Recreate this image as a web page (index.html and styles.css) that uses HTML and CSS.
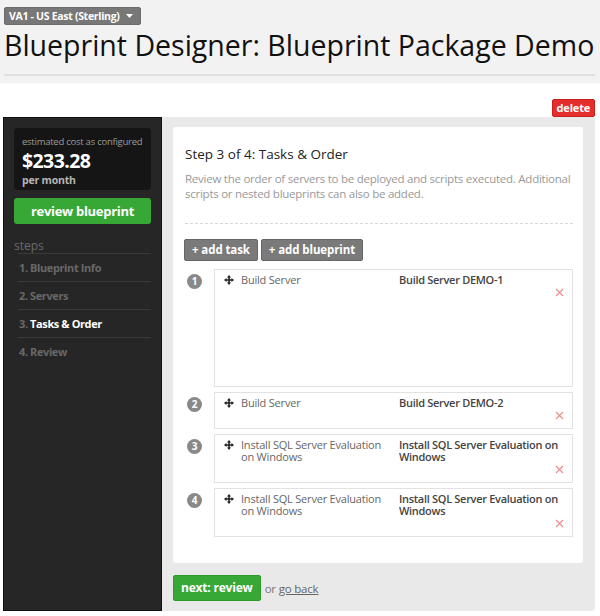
FILE: index.html
```html
<!DOCTYPE html>
<html>
<head>
<meta charset="utf-8">
<link rel="stylesheet" href="styles.css">
</head>
<body>
<div class="header">
  <div class="region">VA1 - US East (Sterling) <svg class="caret" width="7" height="4" viewBox="0 0 7 4"><path d="M0 0H7L3.5 4Z" fill="#fff"/></svg></div>
  <h1>Blueprint Designer: Blueprint Package Demo</h1>
  <div class="rule"></div>
</div>
<div class="toolbar"><span class="delete">delete</span></div>
<div class="layout">
  <div class="sidebar">
    <div class="cost">
      <div class="cost-label">estimated cost as configured</div>
      <div class="cost-value">$233.28</div>
      <div class="cost-unit">per month</div>
    </div>
    <div class="review-btn">review blueprint</div>
    <div class="steps-label">steps</div>
    <ul class="steps">
      <li>1. Blueprint Info</li>
      <li>2. Servers</li>
      <li class="current"><span class="num">3.</span> Tasks &amp; Order</li>
      <li>4. Review</li>
    </ul>
  </div>
  <div class="panel">
    <div class="card">
      <h2>Step 3 of 4: Tasks &amp; Order</h2>
      <p class="desc">Review the order of servers to be deployed and scripts executed. Additional scripts or nested blueprints can also be added.</p>
      <div class="dashed"></div>
      <div class="actions">
        <span class="gbtn">+ add task</span>
        <span class="gbtn">+ add blueprint</span>
      </div>
      <div class="tasks">
        <div class="task">
          <div class="badge">1</div>
          <div class="tbox tall">
            <div class="trow">
              <span class="move"><svg width="10" height="10" viewBox="0 0 10 10"><path d="M5 0L7 2.5H5.8V4.2H7.5V3L10 5L7.5 7V5.8H5.8V7.5H7L5 10L3 7.5H4.2V5.8H2.5V7L0 5L2.5 3V4.2H4.2V2.5H3Z" fill="#222"/></svg></span>
              <span class="tname">Build Server</span>
              <span class="tdetail">Build Server DEMO-1</span>
            </div>
            <div class="tdel"><svg width="9" height="9" viewBox="0 0 9 9"><path d="M1 1L8 8M8 1L1 8" stroke="#ec8a8a" stroke-width="1.1"/></svg></div>
          </div>
        </div>
        <div class="task">
          <div class="badge">2</div>
          <div class="tbox">
            <div class="trow">
              <span class="move"><svg width="10" height="10" viewBox="0 0 10 10"><path d="M5 0L7 2.5H5.8V4.2H7.5V3L10 5L7.5 7V5.8H5.8V7.5H7L5 10L3 7.5H4.2V5.8H2.5V7L0 5L2.5 3V4.2H4.2V2.5H3Z" fill="#222"/></svg></span>
              <span class="tname">Build Server</span>
              <span class="tdetail">Build Server DEMO-2</span>
            </div>
            <div class="tdel"><svg width="9" height="9" viewBox="0 0 9 9"><path d="M1 1L8 8M8 1L1 8" stroke="#ec8a8a" stroke-width="1.1"/></svg></div>
          </div>
        </div>
        <div class="task">
          <div class="badge">3</div>
          <div class="tbox">
            <div class="trow">
              <span class="move"><svg width="10" height="10" viewBox="0 0 10 10"><path d="M5 0L7 2.5H5.8V4.2H7.5V3L10 5L7.5 7V5.8H5.8V7.5H7L5 10L3 7.5H4.2V5.8H2.5V7L0 5L2.5 3V4.2H4.2V2.5H3Z" fill="#222"/></svg></span>
              <span class="tname">Install SQL Server Evaluation on Windows</span>
              <span class="tdetail">Install SQL Server Evaluation on Windows</span>
            </div>
            <div class="tdel"><svg width="9" height="9" viewBox="0 0 9 9"><path d="M1 1L8 8M8 1L1 8" stroke="#ec8a8a" stroke-width="1.1"/></svg></div>
          </div>
        </div>
        <div class="task">
          <div class="badge">4</div>
          <div class="tbox">
            <div class="trow">
              <span class="move"><svg width="10" height="10" viewBox="0 0 10 10"><path d="M5 0L7 2.5H5.8V4.2H7.5V3L10 5L7.5 7V5.8H5.8V7.5H7L5 10L3 7.5H4.2V5.8H2.5V7L0 5L2.5 3V4.2H4.2V2.5H3Z" fill="#222"/></svg></span>
              <span class="tname">Install SQL Server Evaluation on Windows</span>
              <span class="tdetail">Install SQL Server Evaluation on Windows</span>
            </div>
            <div class="tdel"><svg width="9" height="9" viewBox="0 0 9 9"><path d="M1 1L8 8M8 1L1 8" stroke="#ec8a8a" stroke-width="1.1"/></svg></div>
          </div>
        </div>
      </div>
    </div>
    <div class="next-row">
      <span class="next-btn">next: review</span>
      <span class="or">or <a class="back">go back</a></span>
    </div>
  </div>
</div>
</body>
</html>
```

FILE: styles.css
```css
* { box-sizing: border-box; }
body {
  margin: 0;
  font-family: "Open Sans", "DejaVu Sans", sans-serif;
  background: #fff;
  color: #333;
}
.header {
  background: #f2f2f2;
  height: 83px;
  padding: 3px 5px 0 4px;
}
.region {
  display: inline-flex;
  align-items: center;
  gap: 6px;
  height: 18px;
  padding: 0 7px 0 4px;
  background: #777;
  border: 1px solid #6b6b6b;
  border-radius: 2px;
  color: #fff;
  font-size: 10.5px;
  font-weight: 700;
  letter-spacing: -0.3px;
}
.caret { display: block; }
h1 {
  margin: 1px 0 0;
  font-size: 28.5px;
  font-weight: 400;
  line-height: 38px;
  color: #111;
  white-space: nowrap;
}
.rule {
  margin-top: 10px;
  height: 2px;
  background: #e0e0e0;
}
.toolbar {
  display: flex;
  justify-content: flex-end;
  padding: 16px 5px 0 0;
}
.delete {
  height: 18px;
  line-height: 16px;
  padding: 0 4px;
  background: #e52d2d;
  border: 1px solid #c81e1e;
  border-radius: 2px;
  color: #fff;
  font-size: 11px;
  font-weight: 700;
  letter-spacing: -0.2px;
}
.layout {
  display: flex;
  height: 494px;
  margin: 0 5px 0 3px;
}
.sidebar {
  width: 159px;
  flex: none;
  background: #262626;
  border: 1px solid #111;
  padding: 10px 10px 0 10px;
}
.cost {
  background: #151515;
  border-radius: 4px;
  padding: 7px 8px 3px;
}
.cost-label {
  font-size: 9.5px;
  line-height: 14px;
  letter-spacing: -0.25px;
  color: #9a9a9a;
  white-space: nowrap;
}
.cost-value {
  font-size: 19.5px;
  line-height: 24px;
  font-weight: 700;
  letter-spacing: -0.6px;
  color: #fff;
}
.cost-unit {
  font-size: 10.5px;
  line-height: 14px;
  font-weight: 700;
  letter-spacing: -0.2px;
  color: #b5b5b5;
}
.review-btn {
  margin-top: 8px;
  height: 26px;
  line-height: 26px;
  text-align: center;
  background: #37a835;
  border-radius: 3px;
  color: #fff;
  font-size: 13px;
  font-weight: 700;
  letter-spacing: -0.3px;
}
.steps-label {
  margin-top: 15px;
  font-size: 12px;
  line-height: 14px;
  color: #6a6a6a;
}
.steps {
  list-style: none;
  margin: 0 0 0 4px;
  padding: 0;
}
.steps li {
  height: 28px;
  line-height: 27px;
  border-top: 1px solid #3a3a3a;
  padding-left: 1px;
  font-size: 11px;
  font-weight: 700;
  letter-spacing: -0.4px;
  color: #686868;
}
.steps li.current { color: #fff; }
.steps li.current .num { color: #686868; }
.panel {
  flex: 1;
  background: #e9e9e9;
  padding: 10px 12px 0 11px;
  border-bottom-right-radius: 4px;
}
.card {
  background: #fff;
  border-radius: 3px;
  padding: 17px 10px 26px 12px;
}
h2 {
  margin: 0;
  font-size: 13.5px;
  line-height: 20px;
  font-weight: 400;
  color: #222;
}
.desc {
  margin: 7px 0 0;
  font-size: 11.5px;
  line-height: 15px;
  letter-spacing: -0.25px;
  color: #999;
}
.dashed {
  margin-top: 22px;
  border-top: 1px dashed #d8d8d8;
}
.actions {
  display: flex;
  gap: 3px;
  margin-top: 15px;
  margin-left: -1px;
}
.gbtn {
  height: 22px;
  line-height: 20px;
  padding: 0 7px;
  background: #7a7a7a;
  border: 1px solid #666;
  border-radius: 2px;
  color: #fff;
  font-size: 11.5px;
  font-weight: 700;
  letter-spacing: -0.1px;
}
.tasks {
  display: flex;
  flex-direction: column;
  gap: 5px;
  margin-top: 8px;
}
.task {
  display: flex;
}
.badge {
  flex: none;
  width: 15px;
  height: 15px;
  margin: 5px 12px 0 2px;
  border-radius: 50%;
  background: #898989;
  color: #fff;
  font-size: 10px;
  font-weight: 700;
  line-height: 15px;
  text-align: center;
}
.tbox {
  flex: 1;
  border: 1px solid #e2e2e2;
  padding: 4px 8px 7px 9px;
}
.tbox.tall { min-height: 118px; }
.trow {
  display: flex;
  font-size: 11px;
  line-height: 12px;
  letter-spacing: -0.2px;
}
.move {
  flex: none;
  width: 17px;
  padding-top: 1px;
}
.move svg { display: block; }
.tname {
  flex: none;
  width: 158px;
  padding-right: 10px;
  color: #666;
}
.tdetail {
  flex: 1;
  font-weight: 600;
  letter-spacing: -0.3px;
  color: #444;
}
.tdel {
  height: 12px;
  display: flex;
  justify-content: flex-end;
  align-items: center;
}
.tdel svg { display: block; }
.next-row {
  display: flex;
  align-items: center;
  margin-top: 12px;
  gap: 4px;
}
.next-btn {
  height: 26px;
  line-height: 24px;
  padding: 0 7px;
  background: #37a835;
  border: 1px solid #2c9a2a;
  border-radius: 2px;
  color: #fff;
  font-size: 12px;
  font-weight: 700;
  letter-spacing: -0.2px;
}
.or {
  font-size: 11.5px;
  color: #777;
  letter-spacing: -0.2px;
}
.back {
  color: #666;
  text-decoration: underline;
}
```
